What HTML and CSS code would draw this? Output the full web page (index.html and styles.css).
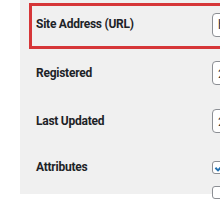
FILE: index.html
```html
<!DOCTYPE html>
<html>
<head>
<meta charset="utf-8">
<link rel="stylesheet" href="styles.css">
</head>
<body>
<div class="panel">
  <div class="row row-highlight">
    <div class="label">Site Address (URL)</div>
    <div class="field"><input class="text-input" type="text" value="https://example.com"></div>
  </div>
  <div class="row">
    <div class="label">Registered</div>
    <div class="field"><input class="text-input" type="text" value="2023-01-01"></div>
  </div>
  <div class="row">
    <div class="label">Last Updated</div>
    <div class="field"><input class="text-input" type="text" value="2023-01-01"></div>
  </div>
  <div class="row row-top">
    <div class="label">Attributes</div>
    <div class="field checks">
      <span class="check checked"><svg viewBox="0 0 13 13" width="13" height="13"><path d="M2.4 6.8 L5 9.4 L10.4 3.6" fill="none" stroke="#2271b1" stroke-width="2"/></svg></span>
      <span class="check"></span>
    </div>
  </div>
</div>
</body>
</html>
```
FILE: styles.css
```css
html, body {
  margin: 0;
  padding: 0;
  background: #ffffff;
  overflow: hidden;
}
body {
  width: 220px;
  height: 210px;
  font-family: Roboto, "Liberation Sans", Arial, sans-serif;
  color: #1d2327;
}
.panel {
  margin-left: 20px;
  width: 200px;
  height: 191px;
  padding-top: 3px;
  background: #f0f0f0;
  overflow-x: clip;
}
.row {
  display: flex;
  align-items: center;
  margin-left: 9px;
  padding-left: 7px;
  height: 48px;
  width: 200px;
  box-sizing: border-box;
}
.row-highlight {
  height: 46px;
  border: 3px solid #d63638;
  padding-left: 4px;
  padding-bottom: 3px;
}
.row-top {
  align-items: flex-start;
  padding-top: 16px;
  height: 49px;
}
.label {
  width: 176px;
  flex: none;
  font-size: 12px;
  font-weight: 700;
  letter-spacing: -0.25px;
  line-height: 13px;
}
.field {
  flex: none;
}
.text-input {
  display: block;
  box-sizing: border-box;
  width: 60px;
  height: 24px;
  margin: 0;
  padding: 0 5px;
  border: 1px solid #8c8f94;
  border-radius: 4px;
  background: #ffffff;
  font-family: Roboto, "Liberation Sans", Arial, sans-serif;
  font-size: 13px;
  color: #2c3338;
}
.checks {
  display: flex;
  flex-direction: column;
  gap: 12px;
}
.check {
  display: block;
  box-sizing: border-box;
  width: 14px;
  height: 13px;
  border: 1px solid #8c8f94;
  border-radius: 3px;
  background: #ffffff;
  position: relative;
}
.check svg {
  position: absolute;
  left: 0;
  top: -1px;
}
```
